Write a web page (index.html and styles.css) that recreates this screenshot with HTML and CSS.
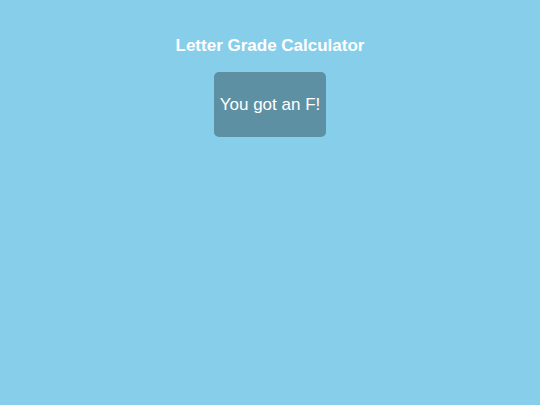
FILE: index.html
```html
<!DOCTYPE html>
<html lang="en">
<head>
    <meta charset="UTF-8">
    <meta name="viewport" content="width=device-width, initial-scale=1.0">
    <title>Letter Grade Calculator</title>
    <link rel="stylesheet" href="styles.css">
</head>
<body>
    <div class="app">
        <h1>Letter Grade Calculator</h1>
        <div class="grade-box" id="result">You got an F!</div>
    </div>
</body>
</html>
```

FILE: styles.css
```css
body {
    font-family: "Liberation Sans", Arial, sans-serif;
    margin: 0;
    background-color: #87ceeb;
    color: white;
    min-height: 405px;
}
.app {
    display: flex;
    flex-direction: column;
    align-items: center;
    padding-top: 36px;
}
h1 {
    font-size: 17px;
    font-weight: bold;
    margin: 0 0 16px 0;
    line-height: 20px;
}
.grade-box {
    width: 112px;
    height: 65px;
    display: flex;
    align-items: center;
    justify-content: center;
    background-color: rgba(0, 0, 0, 0.3);
    border-radius: 5px;
    font-size: 17px;
}
```
